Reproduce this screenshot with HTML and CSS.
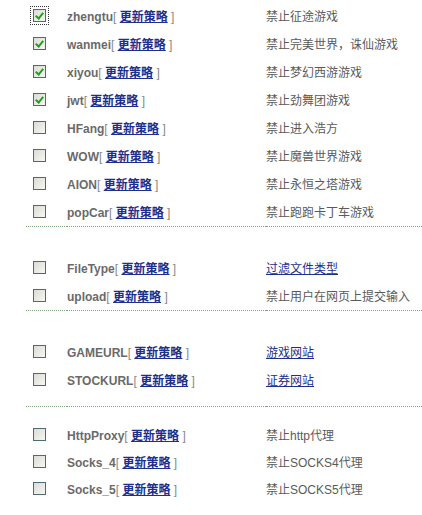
FILE: index.html
```html
<!DOCTYPE html>
<html lang="zh-CN">
<head>
    <meta charset="UTF-8">
    <title>策略列表</title>
    <link rel="stylesheet" href="styles.css">
</head>
<body>

    <!-- 游戏策略 -->
    <table class="policy-table">
        <tr>
            <td class="col-check"><span class="chk checked focus"></span></td>
            <td class="col-name">zhengtu<span class="bracket">[</span> <a href="#">更新策略</a> <span class="bracket">]</span></td>
            <td class="col-desc">禁止征途游戏</td>
        </tr>
        <tr>
            <td class="col-check"><span class="chk checked"></span></td>
            <td class="col-name">wanmei<span class="bracket">[</span> <a href="#">更新策略</a> <span class="bracket">]</span></td>
            <td class="col-desc">禁止完美世界，诛仙游戏</td>
        </tr>
        <tr>
            <td class="col-check"><span class="chk checked"></span></td>
            <td class="col-name">xiyou<span class="bracket">[</span> <a href="#">更新策略</a> <span class="bracket">]</span></td>
            <td class="col-desc">禁止梦幻西游游戏</td>
        </tr>
        <tr>
            <td class="col-check"><span class="chk checked"></span></td>
            <td class="col-name">jwt<span class="bracket">[</span> <a href="#">更新策略</a> <span class="bracket">]</span></td>
            <td class="col-desc">禁止劲舞团游戏</td>
        </tr>
        <tr>
            <td class="col-check"><span class="chk"></span></td>
            <td class="col-name">HFang<span class="bracket">[</span> <a href="#">更新策略</a> <span class="bracket">]</span></td>
            <td class="col-desc">禁止进入浩方</td>
        </tr>
        <tr>
            <td class="col-check"><span class="chk"></span></td>
            <td class="col-name">WOW<span class="bracket">[</span> <a href="#">更新策略</a> <span class="bracket">]</span></td>
            <td class="col-desc">禁止魔兽世界游戏</td>
        </tr>
        <tr>
            <td class="col-check"><span class="chk"></span></td>
            <td class="col-name">AION<span class="bracket">[</span> <a href="#">更新策略</a> <span class="bracket">]</span></td>
            <td class="col-desc">禁止永恒之塔游戏</td>
        </tr>
        <tr class="last">
            <td class="col-check"><span class="chk"></span></td>
            <td class="col-name">popCar<span class="bracket">[</span> <a href="#">更新策略</a> <span class="bracket">]</span></td>
            <td class="col-desc">禁止跑跑卡丁车游戏</td>
        </tr>
    </table>

    <!-- 文件策略 -->
    <table class="policy-table">
        <tr>
            <td class="col-check"><span class="chk"></span></td>
            <td class="col-name">FileType<span class="bracket">[</span> <a href="#">更新策略</a> <span class="bracket">]</span></td>
            <td class="col-desc"><a href="#">过滤文件类型</a></td>
        </tr>
        <tr class="last">
            <td class="col-check"><span class="chk"></span></td>
            <td class="col-name">upload<span class="bracket">[</span> <a href="#">更新策略</a> <span class="bracket">]</span></td>
            <td class="col-desc">禁止用户在网页上提交输入</td>
        </tr>
    </table>

    <!-- 网站策略 -->
    <table class="policy-table tall">
        <tr>
            <td class="col-check"><span class="chk"></span></td>
            <td class="col-name">GAMEURL<span class="bracket">[</span> <a href="#">更新策略</a> <span class="bracket">]</span></td>
            <td class="col-desc"><a href="#">游戏网站</a></td>
        </tr>
        <tr class="last">
            <td class="col-check"><span class="chk"></span></td>
            <td class="col-name">STOCKURL<span class="bracket">[</span> <a href="#">更新策略</a> <span class="bracket">]</span></td>
            <td class="col-desc"><a href="#">证券网站</a></td>
        </tr>
    </table>

    <!-- 代理策略 -->
    <table class="policy-table no-line">
        <tr>
            <td class="col-check"><span class="chk"></span></td>
            <td class="col-name">HttpProxy<span class="bracket">[</span> <a href="#">更新策略</a> <span class="bracket">]</span></td>
            <td class="col-desc">禁止http代理</td>
        </tr>
        <tr>
            <td class="col-check"><span class="chk"></span></td>
            <td class="col-name">Socks_4<span class="bracket">[</span> <a href="#">更新策略</a> <span class="bracket">]</span></td>
            <td class="col-desc">禁止SOCKS4代理</td>
        </tr>
        <tr>
            <td class="col-check"><span class="chk"></span></td>
            <td class="col-name">Socks_5<span class="bracket">[</span> <a href="#">更新策略</a> <span class="bracket">]</span></td>
            <td class="col-desc">禁止SOCKS5代理</td>
        </tr>
    </table>

</body>
</html>
```

FILE: styles.css
```css
body {
    margin: 0;
    padding: 1px 0 0 26px;
    background-color: #fff;
    font-family: Arial, "Liberation Sans", "Noto Sans CJK SC", sans-serif;
    font-size: 12px;
}

.policy-table {
    width: 396px;
    border-collapse: collapse;
    border-bottom: 1px dotted #7fa07f;
    margin-bottom: 26px;
}

.policy-table.tall {
    margin-bottom: 14px;
}

.policy-table.no-line {
    border-bottom: none;
    margin-bottom: 0;
}

.policy-table td {
    height: 28px;
    padding: 0;
    vertical-align: middle;
}

.policy-table tr.last td {
    padding-bottom: 1px;
}

.policy-table.tall tr.last td {
    padding-bottom: 13px;
}

.policy-table.no-line td {
    height: 27px;
}

.col-check {
    width: 34px;
    padding-left: 7px !important;
}

.col-name {
    width: 199px;
    font-weight: bold;
    color: #6a6a6a;
}

.col-desc {
    color: #5a5a5a;
}

.bracket {
    font-weight: normal;
    color: #888;
}

a {
    color: #1c2f8c;
    text-decoration: underline;
}

/* 复选框 */
.chk {
    display: block;
    width: 11px;
    height: 11px;
    border: 1px solid #4d6b73;
    background: linear-gradient(135deg, #dcdcd6 0%, #f6f6f2 100%);
    position: relative;
}

.chk.checked::after {
    content: "";
    position: absolute;
    left: 3px;
    top: 1px;
    width: 3px;
    height: 6px;
    border: solid #21a121;
    border-width: 0 2px 2px 0;
    transform: rotate(40deg);
}

.chk.focus {
    outline: 1px dotted #333;
    outline-offset: 2px;
}
```
